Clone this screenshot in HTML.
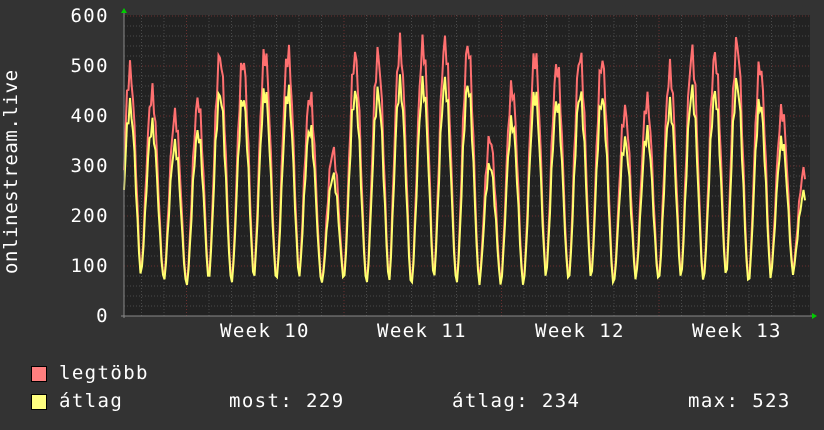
<!DOCTYPE html>
<html><head><meta charset="utf-8"><style>
html,body{margin:0;padding:0;background:#333;}
body{width:824px;height:430px;overflow:hidden;position:relative;font-family:"DejaVu Sans Mono","Liberation Mono",monospace;color:#fff;}
.t{position:absolute;font-size:19px;line-height:19px;white-space:pre;letter-spacing:1.4px;}
.y{position:absolute;font-size:19px;line-height:19px;white-space:pre;letter-spacing:1.4px;right:715px;text-align:right;}
.sq{position:absolute;width:14px;height:14px;border:1px solid #000;}
</style></head><body>
<svg width="824" height="430" style="position:absolute;left:0;top:0" id="g">
<rect x="124" y="15" width="686" height="301" fill="#222"/>
<g id="grid"></g>
<polyline id="red" fill="none" stroke="#ff7070" stroke-width="2"/>
<polyline id="yel" fill="none" stroke="#ffff70" stroke-width="2"/>
<line x1="121" y1="316" x2="814" y2="316" stroke="#888" stroke-width="1"/>
<line x1="124" y1="12" x2="124" y2="318" stroke="#888" stroke-width="1"/>
<polygon points="121,13 127,13 124,8" fill="#0c0"/>
<polygon points="812,313 812,319 817,316" fill="#0c0"/>
</svg>
<div class="y" style="top:7px">600</div>
<div class="y" style="top:57px">500</div>
<div class="y" style="top:107px">400</div>
<div class="y" style="top:157px">300</div>
<div class="y" style="top:207px">200</div>
<div class="y" style="top:257px">100</div>
<div class="y" style="top:307px">0</div>
<div class="t" style="left:2px;top:274px;transform:rotate(-90deg);transform-origin:0 0;letter-spacing:0.6px">onlinestream.live</div>
<div class="t" style="left:220px;top:322px">Week 10</div>
<div class="t" style="left:377px;top:322px">Week 11</div>
<div class="t" style="left:535px;top:322px">Week 12</div>
<div class="t" style="left:692px;top:322px">Week 13</div>
<div class="sq" style="left:31px;top:366px;background:#ff7f7f"></div>
<div class="t" style="left:59px;top:364px">legtöbb</div>
<div class="sq" style="left:31px;top:394px;background:#ffff7f"></div>
<div class="t" style="left:59px;top:392px">átlag</div>
<div class="t" style="left:229px;top:392px">most: 229</div>
<div class="t" style="left:452px;top:392px">átlag: 234</div>
<div class="t" style="left:688px;top:392px">max: 523</div>
<script>
var g=document.getElementById('grid'),s='';
for(var v=20;v<600;v+=20){var y=316-v*0.5;var maj=v%100==0;
s+='<line x1="124" x2="810" y1="'+y+'" y2="'+y+'" stroke="'+(maj?'#6a3030':'#4a4a4a')+'" stroke-dasharray="1,2"/>';}
s+='<line x1="124" x2="810" y1="16" y2="16" stroke="#6a3030" stroke-dasharray="1,2"/>';
for(var x=141.5;x<810;x+=22.5){var wk=Math.abs(((x-185.5)/157.5)-Math.round((x-185.5)/157.5))<0.01;
s+='<line y1="15" y2="316" x1="'+x+'" x2="'+x+'" stroke="'+(wk?'#6a3030':'#4a4a4a')+'" stroke-dasharray="1,2"/>';}
g.innerHTML=s;
var pk=[[130,490],[152,445],[175,400],[198,430],[220,520],[243,510],[265,525],[288,525],[310,440],[333,330],[355,520],[378,520],[400,540],[423,540],[445,545],[468,540],[490,355],[512,455],[535,520],[557,500],[580,520],[602,510],[625,410],[647,430],[670,490],[692,525],[715,520],[737,545],[760,500],[782,410],[804,290]];
var tr=[80,85,70,65,75,70,75,80,75,70,75,70,65,70,75,70,60,65,75,80,75,70,70,80,75,75,80,75,70,85,90];
function val(x,f){for(var i=0;i<pk.length;i++){var d=x-pk[i][0];if(d>=-11.25&&d<11.25){var p=pk[i][1]*f,t=tr[i];
var a=Math.cos(d/11.25*Math.PI/2);a=Math.pow(Math.max(a,0),1.6);var w=0.05*Math.sin(x*1.7)*p;
return t+(p-t)*a+w*a;}}return 100;}
var r='',yy='';for(var x=124;x<=806;x+=1.5){r+=x+','+(316-val(x,1)*0.5)+' ';yy+=x+','+(316-val(x,0.86)*0.5+2)+' ';}
document.getElementById('red').setAttribute('points',r);
document.getElementById('yel').setAttribute('points',yy);
</script>
</body></html>
